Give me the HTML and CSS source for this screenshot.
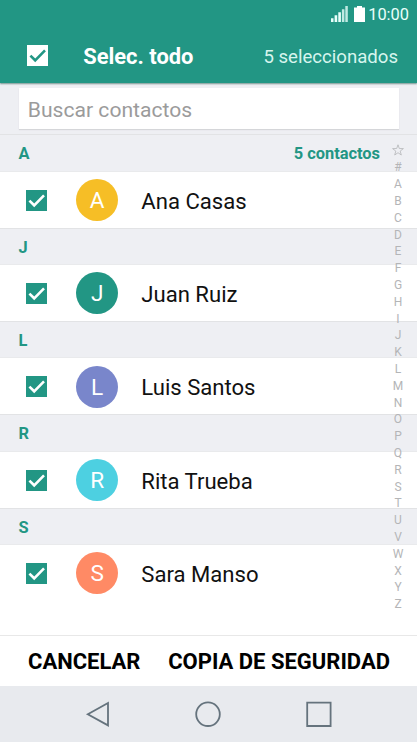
FILE: index.html
```html
<!DOCTYPE html>
<html lang="es">
<head>
<meta charset="utf-8">
<title>Contactos</title>
<link rel="stylesheet" href="styles.css">
</head>
<body>
<svg class="defs" width="0" height="0" aria-hidden="true">
  <symbol id="check" viewBox="0 0 21 21"><path d="M3.4 10.6 8.2 15.3 18 5.4" fill="none" stroke="currentColor" stroke-width="2.6"/></symbol>
</svg>
<div class="screen">
  <header class="topbar">
    <div class="status">
      <svg class="signal" width="17" height="17" viewBox="0 0 17 17" fill="#e8fffb"><path d="M0 12.3h2.5V16H0zM3.6 9.3h2.6V16H3.6zM7.3 6.3h2.6V16H7.3z"/><path d="M10.9 3.3h2.5V16h-2.5zM14.3 0h2.5v16h-2.5z" opacity=".8"/></svg>
      <svg class="battery" width="11" height="17" viewBox="0 0 11 17" fill="#fff"><path d="M3 0h5v1.6h3V16H0V1.6h3z"/></svg>
      <span class="clock">10:00</span>
    </div>
    <div class="selectbar">
      <svg class="checkbox inverse"><use href="#check"/></svg>
      <span class="title">Selec. todo</span>
      <span class="count">5 seleccionados</span>
    </div>
  </header>
  <div class="search"><div class="field">Buscar contactos</div></div>
  <main class="list">
    <div class="section"><span>A</span><span class="total">5 contactos</span></div>
    <div class="row"><svg class="checkbox"><use href="#check"/></svg><span class="avatar yellow">A</span><span class="name">Ana Casas</span></div>
    <div class="section"><span>J</span></div>
    <div class="row"><svg class="checkbox"><use href="#check"/></svg><span class="avatar green">J</span><span class="name">Juan Ruiz</span></div>
    <div class="section"><span>L</span></div>
    <div class="row"><svg class="checkbox"><use href="#check"/></svg><span class="avatar indigo">L</span><span class="name">Luis Santos</span></div>
    <div class="section"><span>R</span></div>
    <div class="row"><svg class="checkbox"><use href="#check"/></svg><span class="avatar cyan">R</span><span class="name">Rita Trueba</span></div>
    <div class="section"><span>S</span></div>
    <div class="row"><svg class="checkbox"><use href="#check"/></svg><span class="avatar coral">S</span><span class="name">Sara Manso</span></div>
    <div class="index">
      <span><svg class="star" width="12" height="12" viewBox="0 0 12 12"><path d="M6 .8 7.3 4.5 11.4 4.6 8.2 7.1 9.3 11 6 8.7 2.7 11 3.8 7.1.6 4.6 4.7 4.5z" fill="none" stroke="currentColor" stroke-width=".8"/></svg></span>
      <span>#</span><span>A</span><span>B</span><span>C</span><span>D</span><span>E</span><span>F</span><span>G</span><span>H</span><span>I</span><span>J</span><span>K</span><span>L</span><span>M</span><span>N</span><span>O</span><span>P</span><span>Q</span><span>R</span><span>S</span><span>T</span><span>U</span><span>V</span><span>W</span><span>X</span><span>Y</span><span>Z</span>
    </div>
  </main>
  <div class="actions"><span class="cancel">CANCELAR</span><span class="backup">COPIA DE SEGURIDAD</span></div>
  <nav class="navbar">
    <svg width="26" height="28" viewBox="0 0 26 28"><path d="M2.8 14.2 23 3v22.4z"/></svg>
    <svg width="28" height="28" viewBox="0 0 28 28"><circle cx="14" cy="14.2" r="11.8"/></svg>
    <svg width="28" height="28" viewBox="0 0 28 28"><path d="M2.2 2.6h23.4V26H2.2z"/></svg>
  </nav>
</div>
</body>
</html>
```
FILE: styles.css
```css
* { box-sizing: border-box; }
body { margin: 0; font-family: Roboto, sans-serif; background: #fff; }
svg { display: block; flex: none; }
.defs { position: absolute; }
.screen { width: 417px; height: 742px; display: flex; flex-direction: column; overflow: hidden; white-space: nowrap; }
.topbar { height: 83px; flex: none; background: #229684; box-shadow: 0 1px 1.5px rgba(0, 60, 50, .5); z-index: 1; }
.status { height: 29px; display: flex; justify-content: flex-end; align-items: center; padding: 0 8px 0 0; }
.signal { margin-right: 6.5px; }
.battery { margin-right: 3px; }
.clock { font-size: 16.4px; color: #e9fffa; line-height: 20px; padding-top: 1px; }
.selectbar { height: 54px; display: flex; align-items: center; padding: 0 19px 0 26.5px; }
.checkbox { width: 21px; height: 21px; background: #229684; color: #fff; }
.checkbox.inverse { background: #fff; color: #229684; margin-top: -1px; }
.title { margin-left: 35.7px; font-size: 21.9px; font-weight: 700; color: #fff; padding-top: 1px; }
.count { margin-left: auto; font-size: 18.6px; color: #d7f5ee; padding-top: 1px; }
.search { height: 51.3px; flex: none; background: #eeeff3; padding: 5px 18.5px 0; }
.field { height: 41px; background: #fff; padding-left: 9.3px; font-size: 21.1px; line-height: 43px; color: #9b9b9b; box-shadow: 0 1px 1px #d5d6d9; }
.list { position: relative; height: 500.3px; flex: none; }
.section { height: 37.33px; display: flex; justify-content: space-between; align-items: center; padding: 2px 37px 0 18.5px; background: #eeeff3; border-top: 1px solid #e2e3e5; border-bottom: 1px solid #e9eaec; color: #229684; font-size: 16.4px; font-weight: 700; }
.row { height: 56px; display: flex; align-items: center; padding-left: 26.4px; }
.avatar { width: 42px; height: 42px; margin-left: 28.8px; border-radius: 50%; color: #fff; font-size: 22.6px; line-height: 43px; text-align: center; }
.row .checkbox, .avatar { margin-top: .8px; }
.yellow { background: #f6be26; }
.green { background: #229684; }
.indigo { background: #7986cb; }
.cyan { background: #4dd0e1; }
.coral { background: #ff8a65; }
.name { margin-left: 23.1px; padding-top: 2px; font-size: 22.1px; color: #111; }
.index { position: absolute; top: 8.3px; right: 9px; width: 20px; color: #b4b5b7; font-size: 12px; line-height: 16.8px; }
.index span { display: flex; justify-content: center; align-items: center; height: 16.8px; }
.star { margin-top: -1.5px; }
.actions { height: 51.4px; flex: none; border-top: 1px solid #e8e8e8; display: flex; align-items: center; padding: 2px 27px 0 28px; justify-content: space-between; font-size: 22px; font-weight: 700; color: #000; }
.navbar { flex: 1; background: #e8eaee; display: flex; justify-content: center; align-items: center; gap: 83px; }
.navbar svg { fill: none; stroke: #65737d; stroke-width: 1.8; }
```
